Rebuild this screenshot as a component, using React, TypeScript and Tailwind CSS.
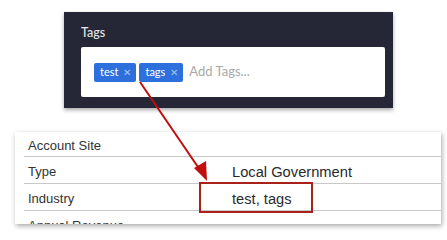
import React from 'react';

const rows: { label: string; value?: string }[] = [
  { label: 'Account Site' },
  { label: 'Type', value: 'Local Government' },
  { label: 'Industry', value: 'test, tags' },
  { label: 'Annual Revenue' },
];

const Chip: React.FC<{ text: string }> = ({ text }) => (
  <span className="flex h-[19px] items-center gap-[5px] rounded-[2px] bg-[#2d6fdc] pl-[6px] pr-[5px] text-[11px] text-white">
    {text}
    <span className="text-[10px] leading-none text-[#a9c4f0]">✕</span>
  </span>
);

export default function App() {
  return (
    <div className="relative h-[240px] w-[447px] overflow-hidden bg-white" style={{ fontFamily: 'Lato, sans-serif' }}>
      {/* Tags editor */}
      <div className="ml-[64px] mt-[12px] h-[96px] w-[329px] bg-[#252736] pl-[17px] pr-[8px] pt-[12px] shadow-[0_2px_4px_rgba(0,0,0,0.35)]">
        <div className="text-[12.5px] font-medium leading-[18px] text-[#e6e6ea]">Tags</div>
        <div className="mt-[5px] flex h-[50px] items-center gap-[3px] rounded-[2px] bg-white pl-[13px]">
          <Chip text="test" />
          <Chip text="tags" />
          <span className="ml-[3px] text-[13px] text-[#a8a8a8]">Add Tags...</span>
        </div>
      </div>

      {/* Account details */}
      <div
        className="ml-[15px] mt-[24px] h-[92px] w-[426px] overflow-hidden bg-white pl-[9px] shadow-[1px_2px_5px_rgba(0,0,0,0.35)]"
        style={{ fontFamily: '"Liberation Sans", Arial, sans-serif' }}
      >
        {rows.map((row, i) => (
          <div
            key={row.label}
            className={`flex items-center border-b border-[#c9c9c9] pl-[4px] pt-[4px] ${i === 0 ? 'h-[25px]' : 'h-[27px]'}`}
          >
            <span className="w-[204px] text-[13px] text-[#333333]">{row.label}</span>
            {row.value && <span className="text-[14.7px] text-[#2a2a2a]">{row.value}</span>}
          </div>
        ))}
      </div>

      {/* Highlight box */}
      <div className="absolute left-[199px] top-[182px] h-[31px] w-[114px] border-2 border-[#a8221a]" />

      {/* Arrow */}
      <svg className="absolute left-0 top-0" width="447" height="240">
        <line x1="140" y1="82" x2="200" y2="170" stroke="#c00d0d" strokeWidth="2" />
        <polygon points="207,181 194,168 206,161" fill="#c00d0d" />
      </svg>
    </div>
  );
}
